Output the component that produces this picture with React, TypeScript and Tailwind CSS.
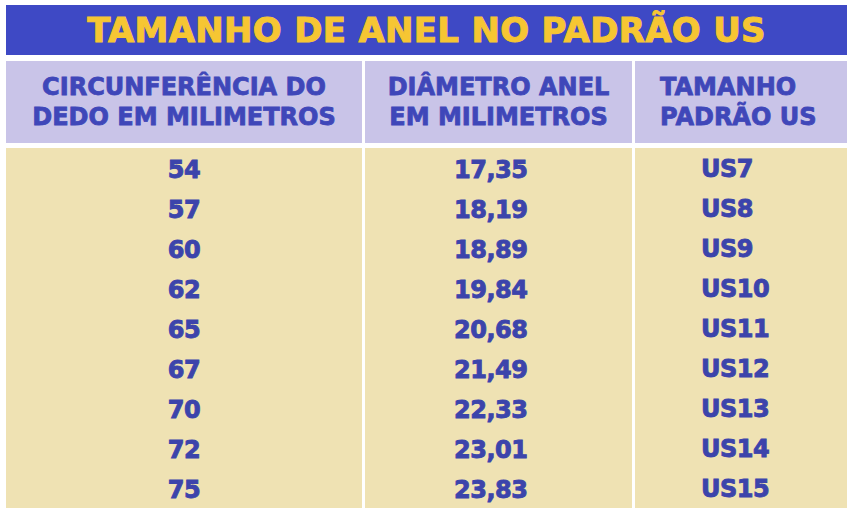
const rows: [string, string, string][] = [
  ["54", "17,35", "US7"],
  ["57", "18,19", "US8"],
  ["60", "18,89", "US9"],
  ["62", "19,84", "US10"],
  ["65", "20,68", "US11"],
  ["67", "21,49", "US12"],
  ["70", "22,33", "US13"],
  ["72", "23,01", "US14"],
  ["75", "23,83", "US15"],
];

export default function App() {
  return (
    <div className="h-[513px] w-[854px] bg-white pl-[6px] pt-[5px] font-['DejaVu_Sans',sans-serif]">
      {/* Title */}
      <div className="flex h-[50px] w-[841px] items-center justify-center bg-[#3e49c5]">
        <h1 className="text-[34px] font-bold leading-none tracking-[0.3px] text-[#f6c633] [-webkit-text-stroke:1px_#f6c633]">
          TAMANHO DE ANEL NO PADRÃO US
        </h1>
      </div>

      {/* Header */}
      <div className="mt-[6px] grid h-[82px] grid-cols-[356px_267px_212px] gap-[3px] text-[24px] font-bold leading-[30px] text-[#3f47b9] [-webkit-text-stroke:0.8px_#3f47b9]">
        <div className="flex items-center justify-center bg-[#c9c4e8] text-center">
          CIRCUNFERÊNCIA DO
          <br />
          DEDO EM MILIMETROS
        </div>
        <div className="flex items-center justify-center bg-[#c9c4e8] text-center">
          DIÂMETRO ANEL
          <br />
          EM MILIMETROS
        </div>
        <div className="flex items-center bg-[#c9c4e8] pl-[25px]">
          TAMANHO
          <br />
          PADRÃO US
        </div>
      </div>

      {/* Rows */}
      <div className="mt-[5px] flex flex-col gap-[3px] text-[24px] font-bold tracking-[-0.5px] text-[#3c44ab] [-webkit-text-stroke:0.9px_#3c44ab]">
        {rows.map(([c, d, us]) => (
          <div key={c} className="grid h-[37px] grid-cols-[356px_267px_212px] gap-[3px]">
            <div className="flex items-center justify-center bg-[#efe2b3] pt-[4px]">{c}</div>
            <div className="flex items-center bg-[#efe2b3] pl-[89px] pt-[3px]">{d}</div>
            <div className="flex items-center bg-[#efe2b3] pl-[66px] pt-[1px]">{us}</div>
          </div>
        ))}
      </div>
    </div>
  );
}
